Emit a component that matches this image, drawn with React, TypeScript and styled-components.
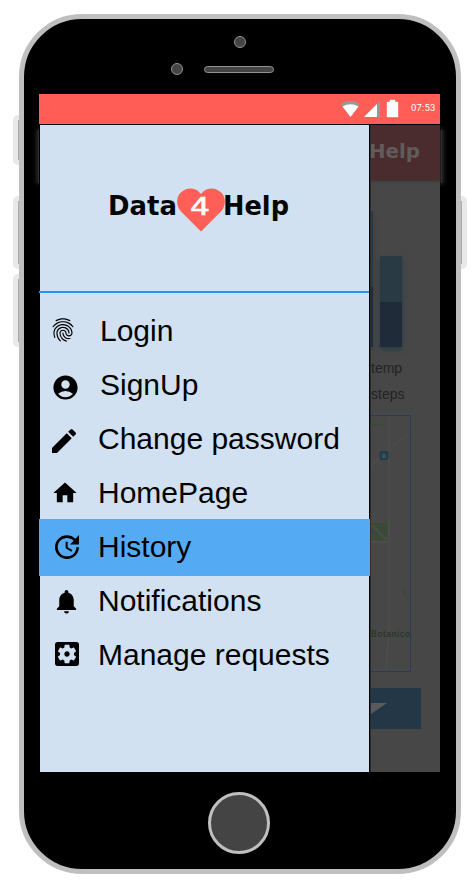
import React from "react";
import styled, { createGlobalStyle } from "styled-components";
import {
  MdAccountCircle,
  MdEdit,
  MdFingerprint,
  MdHome,
  MdNotifications,
  MdSettingsApplications,
  MdUpdate,
} from "react-icons/md";
import type { IconType } from "react-icons";

const GlobalStyle = createGlobalStyle`
  * { box-sizing: border-box; }
  body { margin: 0; background: #fff; font-family: "Liberation Sans", Arial, sans-serif; }
`;

const Page = styled.main`
  width: 472px;
  height: 880px;
  padding: 14px 0 0 19px;
  overflow: hidden;
`;

const Phone = styled.div`
  position: relative;
  display: flex;
  flex-direction: column;
  width: 442px;
  height: 860px;
  padding: 0 16px 0 15px;
  border: 5px solid #bfbfbf;
  border-radius: 63px;
  background: #000;
`;

const SideButton = styled.span<{ $side: "left" | "right"; $top: number; $height: number }>`
  position: absolute;
  ${(p) => p.$side}: -11px;
  top: ${(p) => p.$top}px;
  width: 6px;
  height: ${(p) => p.$height}px;
  background: #e9e9e9;
  border-radius: ${(p) => (p.$side === "left" ? "5px 0 0 5px" : "0 5px 5px 0")};
  &::after {
    content: "";
    position: absolute;
    top: 5px;
    bottom: 5px;
    width: 1px;
    ${(p) => (p.$side === "left" ? "right" : "left")}: 0;
    background: #a8a8a8;
  }
`;

const Glow = styled.span<{ $side: "left" | "right" }>`
  position: absolute;
  top: 111px;
  ${(p) => (p.$side === "left" ? "left: 14px" : "right: 14px")};
  width: 1px;
  height: 53px;
  background: #303030;
  box-shadow: 0 0 4px 1px #404040;
`;

const TopBezel = styled.div`
  display: flex;
  flex-direction: column;
  flex: none;
  height: 75px;
  padding-top: 17px;
`;

const Dot = styled.span`
  width: 12px;
  height: 12px;
  border: 1px solid #939393;
  border-radius: 50%;
  background: #444;
`;

const CameraRow = styled.div`
  display: flex;
  padding-left: 195px;
`;

const SpeakerRow = styled.div`
  display: flex;
  align-items: center;
  gap: 21px;
  margin-top: 15px;
  padding-left: 132px;
`;

const Speaker = styled.span`
  width: 70px;
  height: 7px;
  border: 1px solid #939393;
  border-radius: 4px;
  background: #444;
`;

const Screen = styled.section`
  position: relative;
  flex: none;
  width: 401px;
  height: 678px;
`;

const StatusBar = styled.header`
  display: flex;
  align-items: center;
  justify-content: flex-end;
  height: 30px;
  padding-right: 3px;
  background: #ff5d56;
`;

const StatusIcons = styled.svg`
  display: block;
  width: 62px;
  height: 20px;
  margin-right: 8px;
`;

const Time = styled.time`
  width: 26px;
  margin-top: -2px;
  color: #fff;
  font: 9.5px/20px Roboto, sans-serif;
  letter-spacing: 0.2px;
  white-space: nowrap;
`;

const Content = styled.div`
  display: flex;
  height: 648px;
  padding-top: 1px;
`;

const Drawer = styled.aside`
  flex: none;
  width: 331px;
  border-left: 1px solid #000;
  border-right: 1px solid #000;
  background: #d1e1f1;
`;

const Brand = styled.div`
  display: flex;
  align-items: center;
  height: 168px;
  margin-left: -1px;
  padding-left: 69px;
  border-bottom: 2px solid #2196f3;
`;

const BrandWord = styled.svg`
  display: block;
  flex: none;
  width: 69px;
  height: 30px;
  margin-top: -4px;
  overflow: visible;
  fill: #050505;
  font: bold 26px "DejaVu Sans", sans-serif;
`;

const Heart = styled.svg`
  display: block;
  flex: none;
  width: 48px;
  height: 44px;
  margin-top: 3px;
`;

const Menu = styled.nav`
  padding-top: 10px;
`;

const MenuRow = styled.a<{ $active?: boolean }>`
  display: flex;
  align-items: center;
  height: ${(p) => (p.$active ? 57 : 54)}px;
  margin: 0 ${(p) => (p.$active ? "-1px -3px" : "0 0")} -1px;
  padding-bottom: ${(p) => (p.$active ? 3 : 0)}px;
  background: ${(p) => (p.$active ? "#55abf3" : "transparent")};
  color: #000;
  font-size: 30px;
`;

const IconCell = styled.span<{ $left: number; $drop: number; $width: number }>`
  display: flex;
  flex: none;
  width: ${(p) => p.$width}px;
  padding-left: ${(p) => p.$left}px;
  padding-top: ${(p) => p.$drop}px;
`;

const Label = styled.span`
  margin-top: 2px;
  line-height: 34px;
  white-space: nowrap;
`;

const Peek = styled.div`
  display: flex;
  flex-direction: column;
  flex: none;
  width: 70px;
  overflow: hidden;
  background: #474747;
  border-left: 1px solid #2c2c2c;
`;

const PeekHeader = styled.div`
  flex: none;
  height: 55px;
  background: #4a2c2e;
  box-shadow: 0 1px 3px #303030;
`;

const PeekTitle = styled.svg`
  display: block;
  width: 50px;
  height: 55px;
  overflow: visible;
  fill: #625b5b;
  font: bold 19.5px "DejaVu Sans", sans-serif;
`;

const Bars = styled.div`
  display: flex;
  align-items: flex-end;
  flex: none;
  gap: 7px;
  height: 167px;
`;

const Bar = styled.div<{ $width: number; $height: number; $split: number }>`
  width: ${(p) => p.$width}px;
  height: ${(p) => p.$height}px;
  background: linear-gradient(#2a3a44 ${(p) => p.$split}px, #202b3a ${(p) => p.$split}px);
  box-shadow: 0 3px 5px #2c3c48;
`;

const Legend = styled.div`
  flex: none;
  height: 68px;
  padding-top: 8px;
  color: #232323;
  font-size: 14px;
  line-height: 26px;
`;

const MapView = styled.svg`
  display: block;
  flex: none;
  width: 40px;
  height: 257px;
  border: 1px solid #263f57;
  border-left: 0;
`;

const DropButton = styled.div`
  flex: none;
  width: 50px;
  height: 41px;
  margin-top: 16px;
  padding-top: 15px;
  background: #243747;
`;

const Wedge = styled.svg`
  display: block;
  width: 17px;
  height: 12px;
`;

const HomeButton = styled.span`
  flex: none;
  width: 62px;
  height: 62px;
  margin: 20px 0 0 169px;
  border: 3px solid #bfbfbf;
  border-radius: 50%;
  background: #444;
`;

interface Item {
  label: string;
  Icon: IconType;
  size: number;
  left: number;
  drop: number;
  text: number;
  active?: boolean;
}

const items: Item[] = [
  { label: "Login", Icon: MdFingerprint, size: 28, left: 10, drop: 0, text: 61 },
  { label: "SignUp", Icon: MdAccountCircle, size: 29, left: 11.5, drop: 6, text: 61 },
  { label: "Change password", Icon: MdEdit, size: 32, left: 9, drop: 5, text: 59 },
  { label: "HomePage", Icon: MdHome, size: 28, left: 12, drop: 2, text: 59 },
  { label: "History", Icon: MdUpdate, size: 32, left: 12, drop: 2, text: 59, active: true },
  { label: "Notifications", Icon: MdNotifications, size: 29, left: 12.5, drop: 3, text: 59 },
  { label: "Manage requests", Icon: MdSettingsApplications, size: 32, left: 12, drop: 0, text: 59 },
];

export default function App() {
  return (
    <Page>
      <GlobalStyle />
      <Phone>
        <SideButton $side="left" $top={96} $height={50} />
        <SideButton $side="left" $top={177} $height={73} />
        <SideButton $side="left" $top={255} $height={73} />
        <SideButton $side="right" $top={177} $height={73} />
        <Glow $side="left" />
        <Glow $side="right" />
        <TopBezel>
          <CameraRow><Dot /></CameraRow>
          <SpeakerRow><Dot /><Speaker /></SpeakerRow>
        </TopBezel>
        <Screen>
          <StatusBar>
            <StatusIcons viewBox="0 0 62 20">
              <path d="M0 5Q9.500 -1 19 5L9.500 18Z" fill="#999" />
              <path d="M1.500 7.500Q9.500 3 17.500 7.500L9.500 18Z" fill="#fff" />
              <path d="M23 18L39 2V18Z" fill="#999" />
              <path d="M23 18L36 5V18Z" fill="#fff" />
              <path d="M46 3h3V1h5v2h3v15H46Z" fill="#fff" stroke="#fff" strokeWidth=".4" strokeLinejoin="round" />
            </StatusIcons>
            <Time>07:53</Time>
          </StatusBar>
          <Content>
            <Drawer>
              <Brand>
                <BrandWord><text x="0" y="24" textLength="69" lengthAdjust="spacingAndGlyphs">Data</text></BrandWord>
                <Heart viewBox="0 0 48 44">
                  <path d="M24 43.500L4.500 24C-1.500 18-1 8 4.500 4C11-2 20 0 24 6C28 0 37-2 43.500 4C49 8 49.500 18 43.500 24Z" fill="#ff5f57" />
                  <text x="13" y="27" fill="#fff" fontFamily="DejaVu Sans" fontSize="24" textLength="20" lengthAdjust="spacingAndGlyphs" stroke="#fff" strokeWidth=".6">4</text>
                </Heart>
                <BrandWord><text x="-2" y="24" textLength="66" lengthAdjust="spacingAndGlyphs">Help</text></BrandWord>
              </Brand>
              <Menu>
                {items.map(({ label, Icon, size, left, drop, text, active }) => (
                  <MenuRow key={label} $active={active}>
                    <IconCell $left={left} $drop={drop} $width={text}><Icon size={size} /></IconCell>
                    <Label>{label}</Label>
                  </MenuRow>
                ))}
              </Menu>
            </Drawer>
            <Peek>
              <PeekHeader>
                <PeekTitle><text x="-2" y="33" textLength="51" lengthAdjust="spacingAndGlyphs">Help</text></PeekTitle>
              </PeekHeader>
              <Bars>
                <Bar $width={2} $height={136} $split={76} />
                <Bar $width={22} $height={91} $split={46} />
              </Bars>
              <Legend>
                <div>temp</div>
                <div>steps</div>
              </Legend>
              <MapView viewBox="0 0 39 255">
                <path d="M0 8H14L15 10H0Z" fill="#3a4938" />
                <path d="M0 107H17V124H0Z" fill="#3a4938" />
                <path d="M0 109L8 116Q10 120 17 124M0 50L17 33L40 17M18 0V215L15 255M0 126H18" fill="none" stroke="#4b4b4b" strokeWidth="2" />
                <rect x="8.500" y="35" width="9" height="9" rx="2" fill="#213e4d" />
                <path d="M11 42V39L13 37L15 39V42Z" fill="#3f5058" />
                <path d="M31 172l4 1l1 8l-4-2z" fill="#3a4939" />
                <text x="0" y="221" fill="#273729" fontFamily="Roboto" fontSize="9" fontWeight="500" textLength="39">Botanico</text>
              </MapView>
              <DropButton>
                <Wedge viewBox="0 0 17 12"><path d="M0 0H16L0 11Z" fill="#5a5a5a" /></Wedge>
              </DropButton>
            </Peek>
          </Content>
        </Screen>
        <HomeButton />
      </Phone>
    </Page>
  );
}
